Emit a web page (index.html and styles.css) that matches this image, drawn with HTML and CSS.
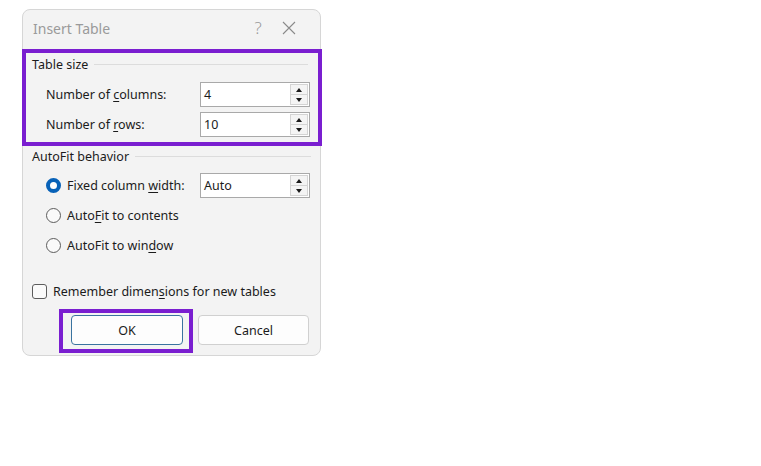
FILE: index.html
```html
<!DOCTYPE html>
<html>
  <head>
    <meta charset="utf-8">
    <title>Insert Table</title>
    <link rel="stylesheet" href="styles.css">
  </head>
  <body>
    <div class="dialog">
      <div class="dialog__title">
        <span class="dialog__caption">Insert Table</span>
        <span class="dialog__help">?</span>
        <span class="dialog__close">
          <svg width="14" height="14" viewBox="0 0 14 14"><path d="M1 1 L13 13 M13 1 L1 13" stroke="#8a8a8a" stroke-width="1.1" fill="none"/></svg>
        </span>
      </div>

      <div class="highlight highlight--group">
        <div class="group group--size">
          <div class="group__header"><span>Table size</span></div>
          <div class="field">
            <label class="field__label"><span>Number of <u>c</u>olumns:</span></label>
            <div class="spin">
              <span class="spin__value">4</span>
              <span class="spin__buttons"><span class="spin__up"></span><span class="spin__down"></span></span>
            </div>
          </div>
          <div class="field">
            <label class="field__label"><span>Number of <u>r</u>ows:</span></label>
            <div class="spin">
              <span class="spin__value">10</span>
              <span class="spin__buttons"><span class="spin__up"></span><span class="spin__down"></span></span>
            </div>
          </div>
        </div>
      </div>

      <div class="group group--fit">
        <div class="group__header"><span>AutoFit behavior</span></div>
        <div class="field field--radio">
          <label class="field__label"><span class="radio radio--on"></span><span>Fixed column <u>w</u>idth:</span></label>
          <div class="spin">
            <span class="spin__value">Auto</span>
            <span class="spin__buttons"><span class="spin__up"></span><span class="spin__down"></span></span>
          </div>
        </div>
        <div class="field field--radio">
          <label class="field__label"><span class="radio"></span><span>Auto<u>F</u>it to contents</span></label>
        </div>
        <div class="field field--radio">
          <label class="field__label"><span class="radio"></span><span>AutoFit to win<u>d</u>ow</span></label>
        </div>
      </div>

      <div class="remember">
        <span class="checkbox"></span><span>Remember dimen<u>s</u>ions for new tables</span>
      </div>

      <div class="buttons">
        <span class="highlight highlight--ok"><button type="button" class="btn btn--default">OK</button></span>
        <button type="button" class="btn">Cancel</button>
      </div>
    </div>
  </body>
</html>
```

FILE: styles.css
```css
body {
    margin: 0;
    background: #ffffff;
    font-family: "Noto Sans", "Open Sans", sans-serif;
    font-size: 12.5px;
    color: #1b1b1b;
}
u {
    text-decoration-thickness: 1px;
    text-underline-offset: 2px;
}

.dialog {
    box-sizing: border-box;
    width: 299px;
    height: 347px;
    margin: 9px 0 0 22px;
    background: #f3f3f3;
    border: 1px solid #d6d6d6;
    border-radius: 8px;
}

.dialog__title {
    display: flex;
    align-items: center;
    height: 39px;
    padding-left: 10px;
}
.dialog__caption {
    flex: 1;
    font-size: 14px;
    color: #9a9a9a;
    margin-top: -3px;
}
.dialog__help {
    width: 18px;
    font-size: 17px;
    font-weight: 300;
    color: #9a9a9a;
    text-align: center;
    margin-right: 15px;
    margin-top: -5px;
}
.dialog__close {
    display: flex;
    width: 14px;
    margin-right: 24px;
    margin-top: -4px;
}

.highlight {
    border: 4px solid #7a1ed0;
}
.highlight--group {
    margin: 0 -2px 0 -1px;
    height: 89px;
}

.group__header {
    display: flex;
    align-items: center;
    height: 16px;
    padding-right: 10px;
}
.group__header::after {
    content: "";
    flex: 1;
    height: 1px;
    margin-left: 6px;
    background: #dcdcdc;
}
.group--size {
    padding: 3px 0 0 6px;
}
.group--size .field {
    padding-left: 14px;
}
.group--size .group__header + .field {
    margin-top: 10px;
}
.group--fit {
    margin-top: 2px;
    padding-left: 9px;
}
.group--fit .group__header {
    padding-right: 9px;
}
.group--fit .group__header + .field {
    margin-top: 9px;
}

.field {
    display: flex;
    align-items: center;
    height: 25px;
    margin-top: 5px;
}
.field__label {
    display: flex;
    align-items: center;
    width: 154px;
}
.field--radio {
    padding-left: 14px;
}

.spin {
    box-sizing: border-box;
    display: flex;
    align-items: stretch;
    width: 110px;
    height: 25px;
    background: #ffffff;
    border: 1px solid #a9a9a9;
    padding: 1px 1px 1px 3px;
}
.spin__value {
    flex: 1;
    line-height: 21px;
}
.spin__buttons {
    display: flex;
    flex-direction: column;
    width: 18px;
}
.spin__up, .spin__down {
    flex: 1;
    display: flex;
    align-items: center;
    justify-content: center;
    background: #f4f4f4;
    border: 1px solid #d4d4d4;
}
.spin__up {
    border-bottom: none;
}
.spin__up::after, .spin__down::after {
    content: "";
    border-left: 3.5px solid transparent;
    border-right: 3.5px solid transparent;
}
.spin__up::after {
    border-bottom: 4px solid #1a1a1a;
}
.spin__down::after {
    border-top: 4px solid #1a1a1a;
}

.radio {
    box-sizing: border-box;
    flex: none;
    width: 15px;
    height: 15px;
    margin-right: 6px;
    border: 1px solid #5c5c5c;
    border-radius: 50%;
    background: #fafafa;
}
.radio--on {
    border: 4.5px solid #0862b8;
    background: #ffffff;
}

.remember {
    display: flex;
    align-items: center;
    height: 20px;
    margin-top: 23px;
    padding-left: 9px;
}
.checkbox {
    box-sizing: border-box;
    flex: none;
    width: 15px;
    height: 15px;
    margin-right: 6px;
    border: 1px solid #5c5c5c;
    border-radius: 3px;
    background: #fafafa;
}

.buttons {
    display: flex;
    align-items: flex-start;
    margin-top: 8px;
    padding-left: 36px;
}
.highlight--ok {
    display: flex;
    padding: 2px 6px 4px 8px;
}
.btn {
    box-sizing: border-box;
    width: 111px;
    height: 30px;
    margin: 6px 0 0 5px;
    font-family: inherit;
    font-size: 12.5px;
    color: #1b1b1b;
    background: #fdfdfd;
    border: 1px solid #d0d0d0;
    border-radius: 4px;
}
.btn--default {
    width: 112px;
    margin: 0;
    border-color: #3a73a0;
}
```
